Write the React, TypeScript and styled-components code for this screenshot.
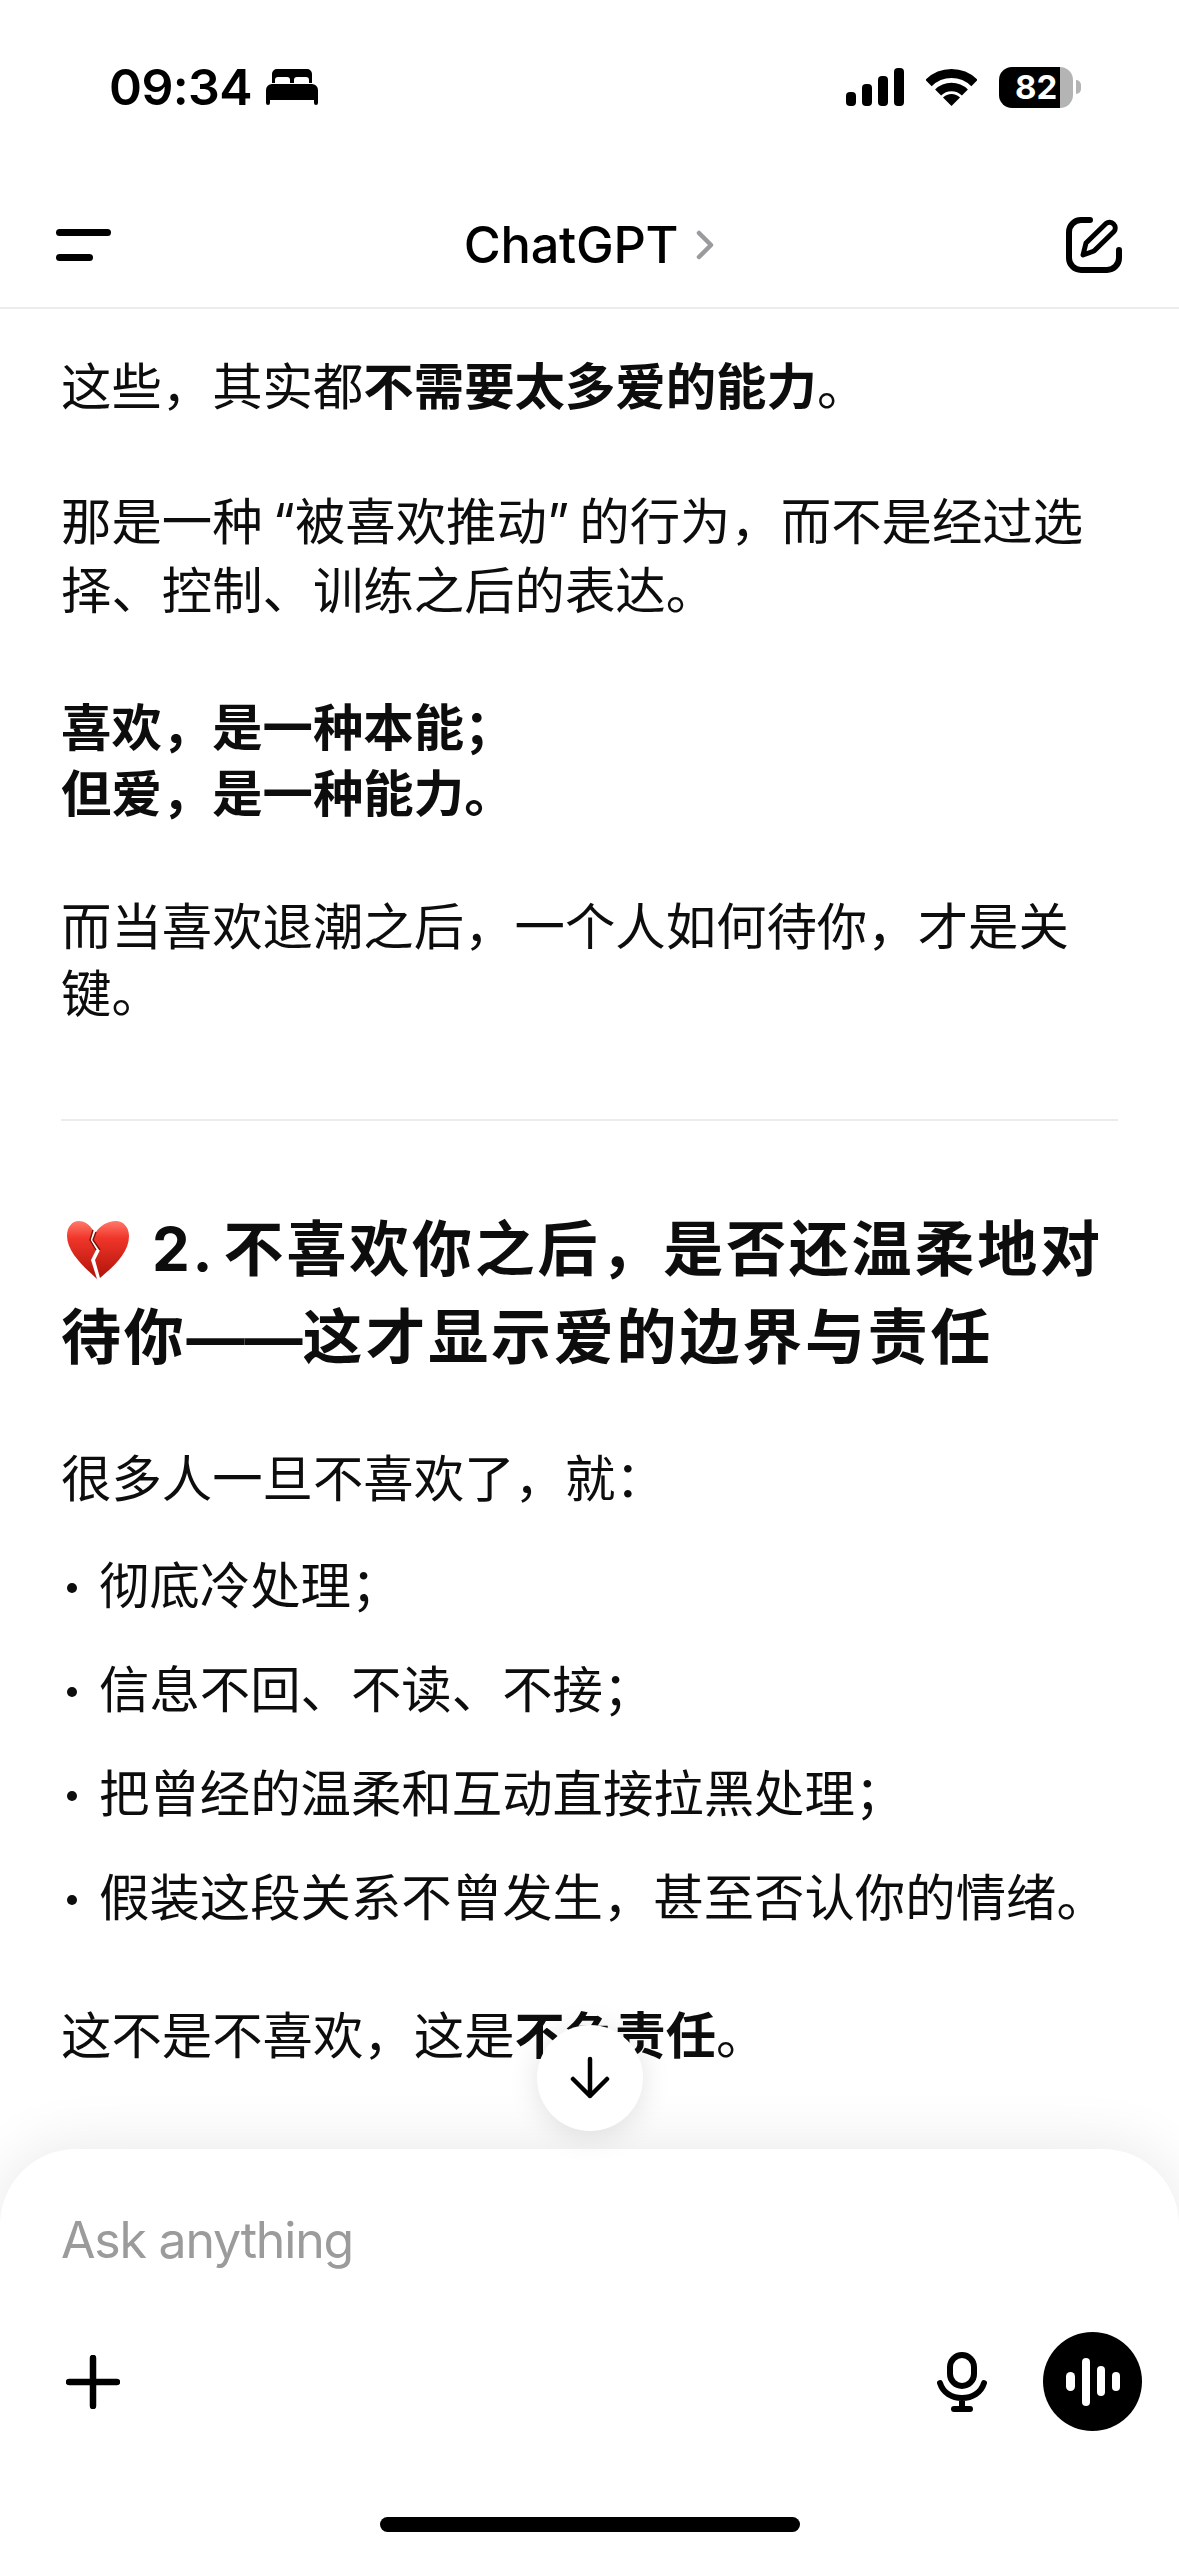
import React from "react";
import styled, { createGlobalStyle } from "styled-components";

const Global = createGlobalStyle`
  html, body { margin: 0; padding: 0; background: #fff; }
  * { box-sizing: border-box; }
`;

const FONT = `Inter, "Noto Sans CJK SC", "Noto Sans", sans-serif`;

const Screen = styled.div`
  width: 1179px;
  height: 2556px;
  position: relative;
  display: flex;
  flex-direction: column;
  overflow: hidden;
  background: #fff;
  color: #0d0d0d;
  font-family: ${FONT};
`;

const StatusBar = styled.div`
  height: 190px;
  flex: none;
  padding: 60px 98px 0 109px;
  display: flex;
  justify-content: space-between;
  align-items: flex-start;
  color: #000;
`;

const StatusLeft = styled.div`
  display: flex;
  align-items: center;
  gap: 14px;
  height: 54px;
`;

const Clock = styled.span`
  font-size: 50px;
  font-weight: 600;
  letter-spacing: -0.6px;
  line-height: 54px;
`;

const StatusRight = styled.div`
  display: flex;
  align-items: center;
  height: 54px;
  gap: 22px;
`;

const Battery = styled.div`
  display: flex;
  align-items: center;
`;

const BatteryBody = styled.div<{ $level: number }>`
  width: 74px;
  height: 41px;
  border-radius: 13px;
  background: linear-gradient(90deg, #000 ${(p) => p.$level}%, #b4b4b4 ${(p) => p.$level}%);
  color: #fff;
  font-size: 33px;
  font-weight: 700;
  line-height: 41px;
  padding-left: 16px;
`;

const BatteryNub = styled.div`
  width: 5px;
  height: 14px;
  margin-left: 3px;
  background: #b4b4b4;
  border-radius: 0 7px 7px 0;
`;

const NavBar = styled.header`
  height: 119px;
  flex: none;
  padding: 0 57px 0 56px;
  border-bottom: 2px solid #ececec;
  display: grid;
  grid-template-columns: 1fr auto 1fr;
  align-items: center;
`;

const MenuIcon = styled.div`
  display: flex;
  flex-direction: column;
  gap: 18px;
  width: 55px;
  margin-top: -8px;
`;

const MenuBar = styled.span<{ $w: number }>`
  display: block;
  height: 7px;
  width: ${(p) => p.$w}px;
  border-radius: 4px;
  background: #000;
`;

const Title = styled.div`
  display: flex;
  align-items: center;
  gap: 18px;
  font-size: 50.5px;
  font-weight: 500;
  letter-spacing: -0.3px;
  color: #000;
  margin-top: -8px;
`;

const NavRight = styled.div`
  display: flex;
  justify-content: flex-end;
  margin-top: -8px;
`;

const Conversation = styled.main`
  flex: 1;
  min-height: 0;
  overflow: hidden;
  padding: 42px 61px 0 61px;
  font-size: 50.4px;
  line-height: 72px;
  word-spacing: -4px;
`;

const Para = styled.p<{ $gap: number; $lh?: number }>`
  margin: ${(p) => p.$gap}px 0 0;
  line-height: ${(p) => p.$lh ?? 72}px;
`;

const Strong = styled.strong`
  font-weight: 700;
`;

const Rule = styled.hr`
  border: none;
  height: 2px;
  background: #ececec;
  margin: 92px 0 0;
`;

const Heading = styled.h2`
  margin: 84px 0 0;
  font-size: 60px;
  line-height: 88px;
  font-weight: 700;
  letter-spacing: 2.8px;
  word-spacing: -7px;
`;

const HeadingLine = styled.span`
  display: block;
  white-space: nowrap;
`;

const Dash = styled.span`
  font-size: 58px;
  letter-spacing: 0;
`;

const Emoji = styled.svg`
  width: 62px;
  height: 58px;
  margin: 0 23px 0 6px;
  vertical-align: -8px;
`;

const BulletList = styled.ul`
  list-style: none;
  margin: 35px 0 0;
  padding: 0;
  display: flex;
  flex-direction: column;
  gap: 32px;
`;

const Bullet = styled.li`
  display: flex;
  white-space: nowrap;
  line-height: 72px;

  &::before {
    content: "";
    flex: none;
    width: 10px;
    height: 10px;
    margin: 33px 22px 0 6px;
    border-radius: 50%;
    background: #0d0d0d;
  }
`;

const ScrollButton = styled.button`
  position: absolute;
  left: 537px;
  top: 2025px;
  width: 106px;
  height: 106px;
  padding: 0;
  border: none;
  border-radius: 50%;
  background: #fff;
  box-shadow: 0 4px 30px rgba(0, 0, 0, 0.12);
  display: flex;
  align-items: center;
  justify-content: center;
  z-index: 2;
`;

const Composer = styled.footer`
  position: relative;
  z-index: 1;
  flex: none;
  height: 407px;
  border-radius: 76px 76px 0 0;
  background: #fff;
  box-shadow: 0 -4px 60px rgba(0, 0, 0, 0.09);
  padding: 61px 37px 0 61px;
  display: flex;
  flex-direction: column;
`;

const Placeholder = styled.div`
  font-size: 50px;
  letter-spacing: -1.2px;
  line-height: 60px;
  color: #9b9b9b;
`;

const Toolbar = styled.div`
  display: flex;
  align-items: center;
  margin-top: 62px;
  padding-left: 5px;
`;

const ToolbarSpacer = styled.div`
  flex: 1;
`;

const VoiceButton = styled.div`
  width: 99px;
  height: 99px;
  margin-left: 56px;
  border-radius: 50%;
  background: #000;
  display: flex;
  align-items: center;
  justify-content: center;
`;

const HomeIndicator = styled.div`
  position: absolute;
  left: 380px;
  bottom: 24px;
  width: 420px;
  height: 15px;
  border-radius: 8px;
  background: #000;
`;

const BedIcon = () => (
  <svg width="52" height="36" viewBox="0 0 52 36">
    <path
      fill="#000"
      d="M11 0h30a5 5 0 0 1 5 5v9h-3v-3a3 3 0 0 0-3-3h-9a3 3 0 0 0-3 3v3h-4v-3a3 3 0 0 0-3-3h-9a3 3 0 0 0-3 3v3H6V5a5 5 0 0 1 5-5Z"
    />
    <path
      fill="#000"
      d="M6 15h40a6 6 0 0 1 6 6v13a2 2 0 0 1-4 0v-3H4v3a2 2 0 0 1-4 0V21a6 6 0 0 1 6-6Z"
    />
  </svg>
);

const SignalIcon = () => (
  <svg width="58" height="38" viewBox="0 0 58 38">
    <rect x="0" y="24" width="10" height="14" rx="4" />
    <rect x="16" y="16" width="10" height="22" rx="4" />
    <rect x="32" y="8" width="10" height="30" rx="4" />
    <rect x="48" y="0" width="10" height="38" rx="4" />
  </svg>
);

const WifiIcon = () => (
  <svg width="51" height="38" viewBox="0 0 51 38" fill="none" stroke="#000">
    <path strokeWidth="9" d="M2.5 15A32.5 32.5 0 0 1 48.5 15" />
    <path strokeWidth="8.5" d="M12.1 24.6A19 19 0 0 1 38.9 24.6" />
    <path fill="#000" stroke="none" d="M25.5 38 17 29.5A12 12 0 0 1 34 29.5Z" />
  </svg>
);

const ChevronIcon = () => (
  <svg width="18" height="30" viewBox="0 0 18 30" fill="none" stroke="#9a9a9f" strokeWidth="4.5" strokeLinecap="round" strokeLinejoin="round">
    <path d="M3 3 15 15 3 27" />
  </svg>
);

const ComposeIcon = () => (
  <svg width="56" height="56" viewBox="0 0 56 56" fill="none" stroke="#000" strokeLinecap="round" strokeLinejoin="round">
    <path strokeWidth="6" d="M24 3H15A12 12 0 0 0 3 15V41A12 12 0 0 0 15 53H41A12 12 0 0 0 53 41V33" />
    <path strokeWidth="5" d="M17 38 20 26 40 6.5a5.7 5.7 0 0 1 8 8L28 34Z" />
  </svg>
);

const ArrowDownIcon = () => (
  <svg width="40" height="44" viewBox="0 0 40 44" fill="none" stroke="#000" strokeWidth="4.5" strokeLinecap="round" strokeLinejoin="round">
    <path d="M20 3V40M3 23 20 40 37 23" />
  </svg>
);

const PlusIcon = () => (
  <svg width="54" height="54" viewBox="0 0 54 54" fill="none" stroke="#000" strokeWidth="6.5" strokeLinecap="round">
    <path d="M27 3V51M3 27H51" />
  </svg>
);

const MicIcon = () => (
  <svg width="50" height="60" viewBox="0 0 50 60" fill="none" stroke="#000" strokeWidth="6" strokeLinecap="round">
    <rect x="13" y="3" width="24" height="31" rx="12" />
    <path d="M3 31C6 41 15 46 25 46S44 41 47 31M25 46V57M17 57H33" />
  </svg>
);

const VoiceIcon = () => (
  <svg width="54" height="48" viewBox="0 0 54 48" fill="#fff">
    <rect x="0" y="14" width="9" height="19" rx="4.5" />
    <rect x="16" y="0" width="8" height="48" rx="4" />
    <rect x="31" y="8" width="8" height="30" rx="4" />
    <rect x="46" y="14" width="8" height="19" rx="4" />
  </svg>
);

const BrokenHeart = () => (
  <Emoji viewBox="0 0 62 58">
    <defs>
      <linearGradient id="heartFill" x1="0" y1="0" x2="0" y2="1">
        <stop offset="0" stopColor="#ff7a6a" />
        <stop offset="0.3" stopColor="#f0352a" />
        <stop offset="1" stopColor="#b01409" />
      </linearGradient>
    </defs>
    <path fill="url(#heartFill)" d="M26 9C22 3 17 0 12 0 5 0 0 6 0 15 0 31 17 46 30 58L24 39 29 29 23 19Z" />
    <path fill="url(#heartFill)" d="M29 11 26 19 33 29 28 39 33 57C46 46 62 32 62 15 62 6 56 0 49 0 40 0 33 5 29 11Z" />
    <path fill="none" stroke="#7e0f08" strokeWidth="1.4" d="M26 9 23 19 29 29M29 11 26 19 33 29" />
  </Emoji>
);

export default function App() {
  return (
    <>
      <Global />
      <Screen lang="zh-CN">
        <StatusBar>
          <StatusLeft>
            <Clock>09:34</Clock>
            <BedIcon />
          </StatusLeft>
          <StatusRight>
            <SignalIcon />
            <WifiIcon />
            <Battery>
              <BatteryBody $level={82}>82</BatteryBody>
              <BatteryNub />
            </Battery>
          </StatusRight>
        </StatusBar>
        <NavBar>
          <MenuIcon>
            <MenuBar $w={55} />
            <MenuBar $w={37} />
          </MenuIcon>
          <Title>
            ChatGPT
            <ChevronIcon />
          </Title>
          <NavRight>
            <ComposeIcon />
          </NavRight>
        </NavBar>
        <Conversation>
          <Para $gap={0}>
            这些，其实都<Strong>不需要太多爱的能力</Strong>。
          </Para>
          <Para $gap={64} $lh={69}>那是一种 “被喜欢推动” 的行为，而不是经过选择、控制、训练之后的表达。</Para>
          <Para $gap={70} $lh={66}>
            <Strong>
              喜欢，是一种本能；
              <br />
              但爱，是一种能力。
            </Strong>
          </Para>
          <Para $gap={66} $lh={67}>而当喜欢退潮之后，一个人如何待你，才是关键。</Para>
          <Rule />
          <Heading>
            <HeadingLine>
              <BrokenHeart />
              2. 不喜欢你之后，是否还温柔地对
            </HeadingLine>
            <HeadingLine>
              待你<Dash>——</Dash>这才显示爱的边界与责任
            </HeadingLine>
          </Heading>
          <Para $gap={61}>很多人一旦不喜欢了，就：</Para>
          <BulletList>
            <Bullet>彻底冷处理；</Bullet>
            <Bullet>信息不回、不读、不接；</Bullet>
            <Bullet>把曾经的温柔和互动直接拉黑处理；</Bullet>
            <Bullet>假装这段关系不曾发生，甚至否认你的情绪。</Bullet>
          </BulletList>
          <Para $gap={66}>
            这不是不喜欢，这是<Strong>不负责任</Strong>。
          </Para>
        </Conversation>
        <ScrollButton aria-label="scroll down">
          <ArrowDownIcon />
        </ScrollButton>
        <Composer>
          <Placeholder>Ask anything</Placeholder>
          <Toolbar>
            <PlusIcon />
            <ToolbarSpacer />
            <MicIcon />
            <VoiceButton>
              <VoiceIcon />
            </VoiceButton>
          </Toolbar>
          <HomeIndicator />
        </Composer>
      </Screen>
    </>
  );
}
